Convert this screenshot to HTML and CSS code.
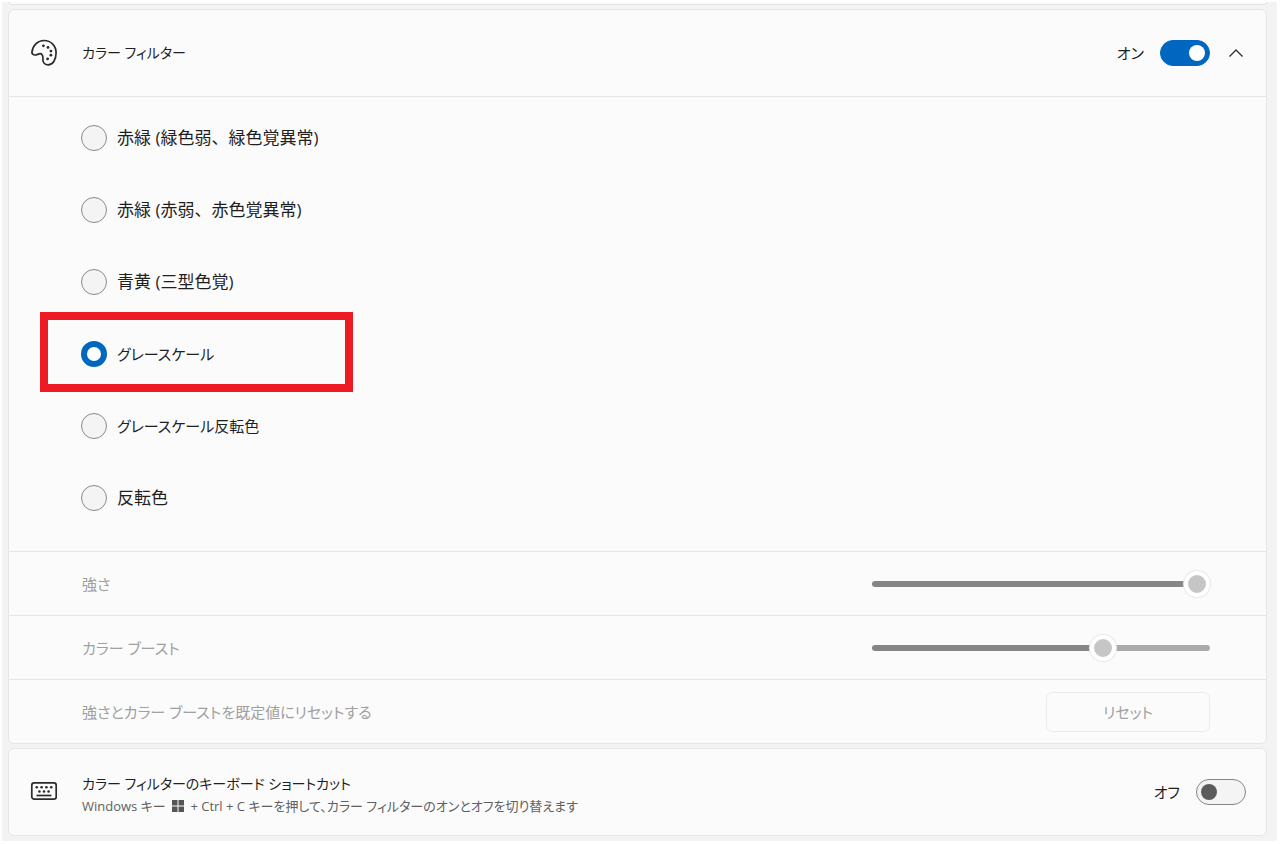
FILE: index.html
```html
<!DOCTYPE html>
<html lang="ja">
<head>
  <meta charset="UTF-8">
  <meta name="viewport" content="width=device-width, initial-scale=1.0">
  <title>カラー フィルター</title>
  <link rel="stylesheet" href="styles.css">
</head>
<body>

  <main class="page">
    <div class="previous-card"></div>

    <section class="card">
      <div class="card-header">
        <svg class="icon" viewBox="0 0 28 28" fill="none" stroke="#2b2b2b" stroke-width="1.7" stroke-linejoin="round">
          <path d="M2 13.2C2.5 6.5 7.7 1.5 14 1.5C21.1 1.5 26.1 7 26.1 13.7C26.1 20.9 22.7 25.8 18.1 25.8C14 25.8 12.5 22.8 12.9 19.4C13.1 16.2 11.7 14.3 9.2 14.8C7.5 15.2 6.6 16.2 4.6 16C2.6 15.7 1.8 15 2 13.2Z"/>
          <g fill="#2b2b2b" stroke="none">
            <circle cx="13.4" cy="6.8" r="1.4"/>
            <circle cx="18" cy="8.4" r="1.4"/>
            <circle cx="20.9" cy="12.1" r="1.4"/>
            <circle cx="20.9" cy="16.2" r="1.4"/>
            <circle cx="17.6" cy="19.9" r="1.4"/>
          </g>
        </svg>
        <h2 class="title" id="filterTitle">カラー フィルター</h2>
        <label class="state" for="filterToggle">オン</label>
        <input type="checkbox" class="toggle" id="filterToggle" checked>
        <button type="button" class="expand" aria-label="折りたたむ">
          <svg viewBox="0 0 20 20" fill="none" stroke="#333" stroke-width="1.4"><path d="M3.5 13.5L10 7L16.5 13.5"/></svg>
        </button>
      </div>

      <div class="options" role="radiogroup" aria-labelledby="filterTitle">
        <label class="option"><input type="radio" name="filter">赤緑 (緑色弱、緑色覚異常)</label>
        <label class="option"><input type="radio" name="filter">赤緑 (赤弱、赤色覚異常)</label>
        <label class="option"><input type="radio" name="filter">青黄 (三型色覚)</label>
        <label class="option kana highlighted"><input type="radio" name="filter" checked>グレースケール</label>
        <label class="option kana"><input type="radio" name="filter">グレースケール反転色</label>
        <label class="option"><input type="radio" name="filter">反転色</label>
      </div>

      <div class="setting">
        <label for="strength">強さ</label>
        <input type="range" class="slider" id="strength" min="0" max="100" value="100" style="--fill: 100%" disabled>
      </div>
      <div class="setting">
        <label for="boost">カラー ブースト</label>
        <input type="range" class="slider" id="boost" min="0" max="100" value="70" style="--fill: 70%" disabled>
      </div>
      <div class="setting">
        <span>強さとカラー ブーストを既定値にリセットする</span>
        <button type="button" class="reset" disabled>リセット</button>
      </div>
    </section>

    <section class="card">
      <div class="card-header">
        <svg class="icon" viewBox="0 0 28 28" fill="none" stroke="#2b2b2b" stroke-width="1.7">
          <rect x="1.8" y="4.8" width="24.4" height="16.4" rx="2.4"/>
          <path d="M6.5 17.5H21.5"/>
          <g fill="#2b2b2b" stroke="none">
            <circle cx="6.8" cy="9.3" r="1.3"/>
            <circle cx="11.6" cy="9.3" r="1.3"/>
            <circle cx="16.4" cy="9.3" r="1.3"/>
            <circle cx="21.2" cy="9.3" r="1.3"/>
            <circle cx="9.4" cy="13.5" r="1.3"/>
            <circle cx="14" cy="13.5" r="1.3"/>
            <circle cx="18.6" cy="13.5" r="1.3"/>
          </g>
        </svg>
        <div class="title description">
          <h2>カラー フィルターのキーボード ショートカット</h2>
          <p>Windows キー <svg class="win" viewBox="0 0 12 12" fill="#555"><path d="M0 0H5.5V5.5H0ZM6.5 0H12V5.5H6.5ZM0 6.5H5.5V12H0ZM6.5 6.5H12V12H6.5Z"/></svg> + Ctrl + C キーを押して、カラー フィルターのオンとオフを切り替えます</p>
        </div>
        <label class="state" for="shortcutToggle">オフ</label>
        <input type="checkbox" class="toggle" id="shortcutToggle">
      </div>
    </section>
  </main>

</body>
</html>
```
FILE: styles.css
```css
*, *::before, *::after {
  box-sizing: border-box;
}
body {
  margin: 0;
  padding: 2px 3px 3px 2px;
  background: #fff;
  color: #1f1f1f;
  font-family: "Open Sans", "Noto Sans CJK JP", sans-serif;
  font-size: 15px;
  line-height: 22px;
  font-feature-settings: "palt";
}
.page {
  background: #f3f3f3;
  padding: 0 10px 5px 6px;
}
.previous-card {
  height: 3px;
  background: #fbfbfb;
  border: 1px solid #e5e5e5;
  border-top: none;
  border-radius: 0 0 6px 6px;
}
.card {
  margin-top: 4px;
  background: #fbfbfb;
  border: 1px solid #e5e5e5;
  border-radius: 6px;
}
.card-header {
  display: flex;
  align-items: center;
  min-height: 86px;
  padding: 0 20px 0 21px;
}
.icon {
  width: 28px;
  height: 28px;
  margin-right: 24px;
}
h2 {
  margin: 0;
  font-size: 14px;
  font-weight: normal;
}
.title {
  flex: 1;
}
.description {
  padding-top: 6px;
}
.description p {
  margin: 0;
  color: #606060;
  font-size: 13px;
  line-height: 22px;
}
.win {
  width: 12px;
  height: 12px;
  margin: 0 3px;
  vertical-align: -1px;
}
.state {
  margin-right: 16px;
}
.toggle {
  appearance: none;
  width: 50px;
  height: 26px;
  margin: 0;
  padding: 4px;
  background: #f4f4f4;
  border: 1px solid #868686;
  border-radius: 13px;
}
.toggle::before {
  content: "";
  display: block;
  width: 16px;
  height: 16px;
  border-radius: 50%;
  background: #5c5c5c;
}
.toggle:checked {
  background: #0067c0;
  border-color: #0067c0;
}
.toggle:checked::before {
  margin-left: auto;
  background: #fff;
}
.expand {
  width: 20px;
  height: 20px;
  margin-left: 16px;
  padding: 0;
  background: none;
  border: none;
}
.expand svg {
  display: block;
}
.options {
  padding: 5px 32px 17px 31px;
  border-top: 1px solid #e5e5e5;
}
.option {
  position: relative;
  display: flex;
  align-items: center;
  height: 72px;
  padding-left: 41px;
  font-size: 17px;
  font-feature-settings: normal;
}
.kana {
  font-size: 15px;
  font-feature-settings: "palt";
}
.option input {
  appearance: none;
  width: 26px;
  height: 26px;
  margin: 0 10px 0 0;
  background: #f4f4f4;
  border: 1px solid #8a8a8a;
  border-radius: 50%;
}
.option input:checked {
  background: #fff;
  border: 6px solid #0067c0;
}
.highlighted::after {
  content: "";
  position: absolute;
  top: -6px;
  left: 0;
  width: 313px;
  height: 80px;
  border: 8px solid #ed1c24;
}
.setting {
  display: flex;
  align-items: center;
  justify-content: space-between;
  min-height: 64px;
  padding: 0 56px 0 73px;
  border-top: 1px solid #e5e5e5;
  color: #a0a0a0;
}
.slider {
  appearance: none;
  width: 338px;
  height: 26px;
  margin: 0;
  background: none;
}
.slider::-webkit-slider-runnable-track {
  height: 6px;
  border-radius: 3px;
  background: linear-gradient(to right, #868686 var(--fill), #aaa var(--fill));
}
.slider::-webkit-slider-thumb {
  appearance: none;
  width: 26px;
  height: 26px;
  margin-top: -10px;
  background: #c6c6c6;
  border: 4px solid #fff;
  border-radius: 50%;
  box-shadow: 0 0 1px 1px #e9e9e9;
}
.reset {
  width: 164px;
  height: 40px;
  background: #fbfbfb;
  border: 1px solid #ebebeb;
  border-radius: 6px;
  color: #a0a0a0;
  font: inherit;
  font-feature-settings: inherit;
}
```
